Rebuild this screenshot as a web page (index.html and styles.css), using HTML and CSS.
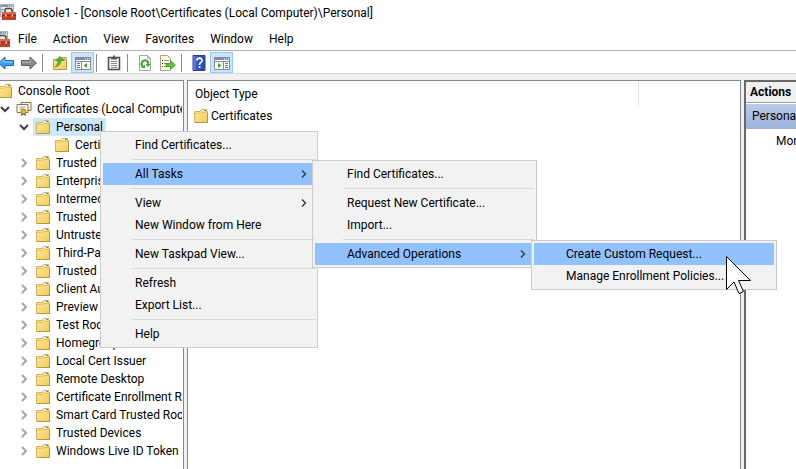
FILE: index.html
```html
<!DOCTYPE html>
<html lang="en">
<head>
    <meta charset="UTF-8">
    <meta name="viewport" content="width=device-width, initial-scale=1.0">
    <title>Console1 - [Console Root\Certificates (Local Computer)\Personal]</title>
    <link rel="stylesheet" href="styles.css">
</head>
<body>
    <!-- shared icons -->
    <svg class="defs" aria-hidden="true">
        <linearGradient id="gold" x1="0" y1="0" x2="1" y2="1">
            <stop offset="0" stop-color="#ffeb9c"/>
            <stop offset="1" stop-color="#efcb5c"/>
        </linearGradient>
        <linearGradient id="blue" x1="0" y1="0" x2="1" y2="0">
            <stop offset="0" stop-color="#7f9bea"/>
            <stop offset=".3" stop-color="#3557d0"/>
            <stop offset="1" stop-color="#2a45b8"/>
        </linearGradient>
        <symbol id="folder" viewBox="0 0 14 14">
            <path d="M.5 2.500h6l1-2h5v2h1v11H.5z" fill="url(#gold)" stroke="#d3b45c"/>
            <path d="M8 1.500h4" stroke="#fff"/>
            <path d="M10 1.500h2" stroke="#4a90d9"/>
            <path d="M1 4.500h5.500l1-1h5.500" fill="none" stroke="#e3c468"/>
            <path d="M1 13.500h13M13.500 4v10" stroke="#b8983f"/>
        </symbol>
        <symbol id="certs" viewBox="0 0 15 16">
            <path d="M4.500 1.500h10v8h-10z" fill="#fff8e0" stroke="#8a7340"/>
            <path d="M.500 3.500h11v8h-11z" fill="#fff" stroke="#8a7340"/>
            <path d="M3 6h6M3 8h4" stroke="#8c9bb0"/>
            <path d="M5 11l-.5 4 2.500-1.500L9.500 15 9 11z" fill="#2b62c4"/>
            <circle cx="7" cy="10.500" r="2.500" fill="#f5b31b" stroke="#c27c08"/>
        </symbol>
        <symbol id="toolbox" viewBox="0 0 16 16">
            <path d="M.5.5h13v12H.5z" fill="#e4e8ec" stroke="#a3acb8"/>
            <path d="M1 1h12v2H1z" fill="#8795a6"/>
            <path d="M8 2h1M10 2h1M12 2h1" stroke="#fff"/>
            <path d="M1 5.500h3M1 7.500h1" stroke="#8795a6"/>
            <path d="M5 8V6.500q0-2 2-2h3q2 0 2 2V8" fill="none" stroke="#444" stroke-width="1.500"/>
            <path d="M2 8h14v8H2z" fill="#c63d22"/>
            <path d="M2 8h14v2H2z" fill="#df684a"/>
            <path d="M2 11.500h14" stroke="#9c2c17"/>
            <path d="M5 10.500h1.500v2H5zM11.500 10.500H13v2h-1.500z" fill="#f5d9d0"/>
        </symbol>
        <symbol id="chevron" viewBox="0 0 8 10">
            <path d="M2 1l4 4-4 4" fill="none" stroke="currentColor" stroke-width="2"/>
        </symbol>
        <symbol id="chevron-down" viewBox="0 0 10 8">
            <path d="M1 2l4 4 4-4" fill="none" stroke="currentColor" stroke-width="2"/>
        </symbol>
        <symbol id="more" viewBox="0 0 6 10">
            <path d="M1 1.500l3.500 3.500L1 8.500" fill="none" stroke="currentColor" stroke-width="1.300"/>
        </symbol>
    </svg>

    <div class="window">
        <header class="titlebar">
            <svg class="app-icon"><use href="#toolbox"/></svg>
            <span>Console1 - [Console Root\Certificates (Local Computer)\Personal]</span>
        </header>

        <nav class="menubar">
            <svg class="app-icon"><use href="#toolbox"/></svg>
            <button>File</button>
            <button>Action</button>
            <button>View</button>
            <button>Favorites</button>
            <button>Window</button>
            <button>Help</button>
        </nav>

        <div class="toolbar">
            <button aria-label="Back">
                <svg viewBox="0 0 16 16"><path d="M.5 8L7 2v3.500h8.500v5H7V14z" fill="#3e9cf0" stroke="#1c64b4"/><path d="M3 7.500l3-3V7h9" fill="none" stroke="#8fcbff"/></svg>
            </button>
            <button aria-label="Forward">
                <svg viewBox="0 0 16 16"><path d="M15.500 8L9 2v3.500H.5v5H9V14z" fill="#8a8a8a" stroke="#5c5c5c"/><path d="M1 7h8.500V4.500" fill="none" stroke="#bbb"/></svg>
            </button>
            <span class="divider"></span>
            <button aria-label="Up one level">
                <svg viewBox="0 0 16 16"><path d="M1.500 4.500h6l1.500-2h5v2h.5v10h-13z" fill="url(#gold)" stroke="#c09a3c"/><path d="M10 4.500h3" stroke="#4a90d9"/><path d="M3 12q3-2 3-6.500H3.500L8 1.500 12 5.500H9q0 5-6 6.500z" fill="#4bb52b" stroke="#2f8a18" stroke-width=".6"/></svg>
            </button>
            <button class="on" aria-label="Show or hide console tree">
                <svg viewBox="0 0 16 16"><path d="M.5 2.500h15v12H.5z" fill="#fff" stroke="#818c9c"/><path d="M1 3h14v2H1z" fill="#818c9c"/><path d="M10 4h1M12 4h1M14 4h1" stroke="#fff"/><path d="M1 6.500h14M6.500 7v7" stroke="#818c9c"/><path d="M2 8.500h3M2 10.500h3M2 12.500h3" stroke="#4f78bf"/><path d="M12 8v5l-3.500-2.500z" fill="#3fa71e"/></svg>
            </button>
            <span class="divider"></span>
            <button aria-label="Properties">
                <svg viewBox="0 0 16 16"><path d="M2.500 2.500h11v12h-11z" fill="#fff" stroke="#4a4a4a" stroke-width="1.500"/><path d="M5 2h2V.5h2V2h2v2.500H5z" fill="#555"/><path d="M5 6.500h6M5 8.500h6M5 10.500h6M5 12.500h6" stroke="#8a8a8a"/></svg>
            </button>
            <span class="divider"></span>
            <button aria-label="Refresh">
                <svg viewBox="0 0 16 16"><path d="M2.500.5h8l3 3v12h-11z" fill="#fff" stroke="#a6a6a6"/><path d="M10.500.5v3h3" fill="none" stroke="#a6a6a6"/><path d="M6 12Q3.800 10 4.800 7.500 6 5 8.500 5.200 11.500 6 11.300 9" fill="none" stroke="#37a32a" stroke-width="2"/><path d="M8.500 9h5L11 12z" fill="#37a32a"/><path d="M4.500 13H8V9.500z" fill="#37a32a"/></svg>
            </button>
            <button aria-label="Export list">
                <svg viewBox="0 0 16 16"><path d="M.5.5h7l3 3v12H.5z" fill="#fffbe5" stroke="#b0a57d"/><path d="M2 5.500h1M2 8.500h1M2 11.500h1" stroke="#333"/><path d="M4 5.500h5M4 8.500h5M4 11.500h5" stroke="#8d8d8d"/><path d="M6 8.500h4.500V5.500l5 4.500-5 4.500v-3H6z" fill="#60c43b" stroke="#369a1e" stroke-width=".7"/></svg>
            </button>
            <span class="divider"></span>
            <button aria-label="Help">
                <svg viewBox="0 0 16 16"><path d="M2 .5h12v15H2z" fill="url(#blue)" stroke="#2c3f9a"/><path d="M5.800 5.500Q6 3.200 8.500 3.200 11 3.400 11 5.500 11 7 9.500 7.800 8.500 8.500 8.500 10" fill="none" stroke="#fff" stroke-width="1.700"/><path d="M7.600 11.200h1.800V13H7.600z" fill="#fff"/></svg>
            </button>
            <button class="on" aria-label="Show or hide action pane">
                <svg viewBox="0 0 16 16"><path d="M.5 2.500h15v12H.5z" fill="#fff" stroke="#818c9c"/><path d="M1 3h14v2H1z" fill="#818c9c"/><path d="M10 4h1M12 4h1M14 4h1" stroke="#fff"/><path d="M1 6.500h14M9.500 7v7" stroke="#818c9c"/><path d="M11 8.500h3M11 10.500h3M11 12.500h3" stroke="#4f78bf"/><path d="M4 8v5l3.500-2.500z" fill="#3fa71e"/></svg>
            </button>
        </div>

        <main class="panes">
            <section class="pane tree-pane">
                <ul class="tree">
                    <li>
                        <div class="node"><span class="toggle"></span><span class="label"><svg><use href="#folder"/></svg>Console Root</span></div>
                        <ul>
                            <li>
                                <div class="node open"><button class="toggle" aria-label="Collapse"><svg><use href="#chevron-down"/></svg></button><span class="label wide"><svg><use href="#certs"/></svg>Certificates (Local Computer)</span></div>
                                <ul>
                                    <li>
                                        <div class="node open"><button class="toggle" aria-label="Collapse"><svg><use href="#chevron-down"/></svg></button><span class="label selected"><svg><use href="#folder"/></svg>Personal</span></div>
                                        <ul>
                                            <li><div class="node"><span class="toggle"></span><span class="label"><svg><use href="#folder"/></svg>Certificates</span></div></li>
                                        </ul>
                                    </li>
                                    <li><div class="node"><button class="toggle" aria-label="Expand"><svg><use href="#chevron"/></svg></button><span class="label"><svg><use href="#folder"/></svg>Trusted Root</span></div></li>
                                    <li><div class="node"><button class="toggle" aria-label="Expand"><svg><use href="#chevron"/></svg></button><span class="label"><svg><use href="#folder"/></svg>Enterprise Trust</span></div></li>
                                    <li><div class="node"><button class="toggle" aria-label="Expand"><svg><use href="#chevron"/></svg></button><span class="label"><svg><use href="#folder"/></svg>Intermediate</span></div></li>
                                    <li><div class="node"><button class="toggle" aria-label="Expand"><svg><use href="#chevron"/></svg></button><span class="label"><svg><use href="#folder"/></svg>Trusted Publishers</span></div></li>
                                    <li><div class="node"><button class="toggle" aria-label="Expand"><svg><use href="#chevron"/></svg></button><span class="label"><svg><use href="#folder"/></svg>Untrusted</span></div></li>
                                    <li><div class="node"><button class="toggle" aria-label="Expand"><svg><use href="#chevron"/></svg></button><span class="label"><svg><use href="#folder"/></svg>Third-Party Root</span></div></li>
                                    <li><div class="node"><button class="toggle" aria-label="Expand"><svg><use href="#chevron"/></svg></button><span class="label"><svg><use href="#folder"/></svg>Trusted People</span></div></li>
                                    <li><div class="node"><button class="toggle" aria-label="Expand"><svg><use href="#chevron"/></svg></button><span class="label"><svg><use href="#folder"/></svg>Client Authentication</span></div></li>
                                    <li><div class="node"><button class="toggle" aria-label="Expand"><svg><use href="#chevron"/></svg></button><span class="label"><svg><use href="#folder"/></svg>Preview Build Roots</span></div></li>
                                    <li><div class="node"><button class="toggle" aria-label="Expand"><svg><use href="#chevron"/></svg></button><span class="label"><svg><use href="#folder"/></svg>Test Roots</span></div></li>
                                    <li><div class="node"><button class="toggle" aria-label="Expand"><svg><use href="#chevron"/></svg></button><span class="label"><svg><use href="#folder"/></svg>Homegroup</span></div></li>
                                    <li><div class="node"><button class="toggle" aria-label="Expand"><svg><use href="#chevron"/></svg></button><span class="label"><svg><use href="#folder"/></svg>Local Cert Issuer</span></div></li>
                                    <li><div class="node"><button class="toggle" aria-label="Expand"><svg><use href="#chevron"/></svg></button><span class="label"><svg><use href="#folder"/></svg>Remote Desktop</span></div></li>
                                    <li><div class="node"><button class="toggle" aria-label="Expand"><svg><use href="#chevron"/></svg></button><span class="label"><svg><use href="#folder"/></svg>Certificate Enrollment Requests</span></div></li>
                                    <li><div class="node"><button class="toggle" aria-label="Expand"><svg><use href="#chevron"/></svg></button><span class="label"><svg><use href="#folder"/></svg>Smart Card Trusted Roots</span></div></li>
                                    <li><div class="node"><button class="toggle" aria-label="Expand"><svg><use href="#chevron"/></svg></button><span class="label"><svg><use href="#folder"/></svg>Trusted Devices</span></div></li>
                                    <li><div class="node"><button class="toggle" aria-label="Expand"><svg><use href="#chevron"/></svg></button><span class="label"><svg><use href="#folder"/></svg>Windows Live ID Token Issuer</span></div></li>
                                </ul>
                            </li>
                        </ul>
                    </li>
                </ul>
            </section>

            <section class="pane list-pane">
                <table class="list">
                    <thead>
                        <tr><th>Object Type</th><th></th></tr>
                    </thead>
                    <tbody>
                        <tr><td><span class="item"><svg><use href="#folder"/></svg>Certificates</span></td><td></td></tr>
                    </tbody>
                </table>
            </section>

            <aside class="pane actions-pane">
                <h2>Actions</h2>
                <h3>Personal</h3>
                <a href="#">More Actions</a>
            </aside>
        </main>
    </div>

    <!-- context menu of the Personal node -->
    <ul class="menu context">
        <li><button>Find Certificates...</button></li>
        <li class="sep"></li>
        <li>
            <button class="active">All Tasks<svg><use href="#more"/></svg></button>
            <ul class="menu tasks">
                <li><button>Find Certificates...</button></li>
                <li class="sep"></li>
                <li><button>Request New Certificate...</button></li>
                <li><button>Import...</button></li>
                <li class="sep"></li>
                <li>
                    <button class="active">Advanced Operations<svg><use href="#more"/></svg></button>
                    <ul class="menu advanced">
                        <li><button class="active">Create Custom Request...</button></li>
                        <li><button>Manage Enrollment Policies...</button></li>
                    </ul>
                </li>
            </ul>
        </li>
        <li class="sep"></li>
        <li><button>View<svg><use href="#more"/></svg></button></li>
        <li><button>New Window from Here</button></li>
        <li class="sep"></li>
        <li><button>New Taskpad View...</button></li>
        <li class="sep"></li>
        <li><button>Refresh</button></li>
        <li><button>Export List...</button></li>
        <li class="sep"></li>
        <li><button>Help</button></li>
    </ul>

    <svg class="cursor" viewBox="0 0 27 40"><path d="M.5.500v33l7.500-7.500 5 11.500 4.500-2L12.500 24.500h12z" fill="#fff" stroke="#000"/></svg>
</body>
</html>
```
FILE: styles.css
```css
* {
    box-sizing: border-box;
}
body {
    margin: 0;
    font-family: Roboto, "Liberation Sans", sans-serif;
    font-size: 12px;
    line-height: 18px;
    color: #000;
    background: #fff;
    overflow: hidden;
    white-space: nowrap;
}
ul {
    list-style: none;
    margin: 0;
    padding: 0;
}
button {
    font: inherit;
    color: inherit;
    background: none;
    border: 0;
    padding: 0;
}
svg {
    display: block;
    flex: none;
}
.defs {
    position: absolute;
    width: 0;
    height: 0;
}
.window {
    display: flex;
    flex-direction: column;
    height: 100vh;
}
.app-icon {
    width: 16px;
    height: 16px;
}

/* title, menu and tool bars */
.titlebar {
    display: flex;
    align-items: center;
    gap: 5px;
    height: 26px;
}
.titlebar .app-icon {
    margin-bottom: 2px;
}
.menubar {
    display: flex;
    align-items: center;
    height: 25px;
    padding-top: 2px;
    margin-left: -6px;
    border-bottom: 1px solid #b4b4b4;
}
.menubar button {
    padding: 0 8px;
}
.toolbar {
    display: flex;
    align-items: center;
    height: 23px;
    padding-top: 1px;
    margin-left: -6px;
    border-bottom: 1px solid #d9d9d9;
}
.toolbar button {
    display: flex;
    align-items: center;
    justify-content: center;
    width: 23px;
    height: 21px;
    border: 1px solid transparent;
}
.toolbar button.on {
    background: #cce4fb;
    border-color: #99c9f5;
}
.toolbar svg {
    width: 16px;
    height: 16px;
}
.divider {
    width: 1px;
    height: 18px;
    margin: 0 5px 0 2px;
    background: #8c8c8c;
}

/* panes */
.panes {
    display: flex;
    flex: 1;
    gap: 3px;
    min-height: 0;
    padding-top: 6px;
    background: #f0f0f0;
}
.pane {
    background: #fff;
    border: 1px solid #828790;
    border-bottom: 0;
    overflow: hidden;
}
.tree-pane {
    width: 184px;
    flex: none;
    border-left: 0;
    padding: 1px 1px 0 0;
}
.list-pane {
    flex: 1;
}
.actions-pane {
    width: 52px;
    flex: none;
    border: solid #696969;
    border-width: 2px 0 0 2px;
}

.tree {
    margin-left: -24px;
    overflow: hidden;
}
.tree ul {
    margin-left: 19px;
}
.node {
    display: flex;
    height: 18px;
}
.toggle {
    display: flex;
    align-items: center;
    justify-content: center;
    width: 19px;
    flex: none;
    color: #a6a6a6;
}
.toggle svg {
    width: 8px;
    height: 10px;
}
.open .toggle {
    color: #404040;
}
.open .toggle svg {
    width: 10px;
    height: 8px;
}
.label,
.item {
    display: flex;
    align-items: center;
    gap: 6px;
    padding: 0 3px;
}
.label svg,
.item svg {
    width: 14px;
    height: 14px;
}
.label.wide {
    gap: 5px;
    padding-left: 2px;
}
.label.wide svg {
    width: 16px;
    height: 16px;
}
.selected {
    background: #cce8ff;
}

.list {
    width: 100%;
    border-collapse: collapse;
    table-layout: fixed;
}
.list th {
    height: 25px;
    padding: 0 7px;
    font-weight: normal;
    text-align: left;
}
.list th:first-child {
    width: 450px;
    border-right: 1px solid #e5e5e5;
}
.list td {
    height: 20px;
    padding: 0 3px;
}
.item {
    gap: 3px;
}

.actions-pane h2,
.actions-pane h3 {
    margin: 0;
    font-size: 12px;
}
.actions-pane h2 {
    height: 21px;
    padding-left: 4px;
    line-height: 21px;
    background: #f0f0f0;
    border-bottom: 1px solid #a0a0a0;
}
.actions-pane h3 {
    height: 25px;
    margin-top: 1px;
    padding-left: 6px;
    font-weight: normal;
    line-height: 25px;
    background: linear-gradient(#b9cbe9, #9cb2dc);
}
.actions-pane a {
    display: block;
    padding-left: 30px;
    line-height: 24px;
    color: inherit;
    text-decoration: none;
}

/* popup menus */
.menu {
    position: absolute;
    padding: 2px;
    background: #f2f2f2;
    border: 1px solid #ccc;
}
.menu li {
    position: relative;
}
.menu button {
    display: flex;
    align-items: center;
    justify-content: space-between;
    width: 100%;
    height: 22px;
    padding: 0 8px 0 32px;
    text-align: left;
}
.menu button.active {
    background: #91c1ff;
}
.menu button svg {
    width: 6px;
    height: 10px;
    color: #333;
}
.menu .sep {
    height: 1px;
    margin: 3px 0 3px 28px;
    background: #d7d7d7;
}
.context {
    top: 131px;
    left: 100px;
    width: 218px;
}
.tasks {
    top: -3px;
    left: calc(100% - 3px);
    width: 225px;
}
.advanced {
    top: -3px;
    left: calc(100% - 3px);
    width: 246px;
}
.cursor {
    position: absolute;
    top: 256px;
    left: 726px;
    width: 27px;
    height: 40px;
}
```
